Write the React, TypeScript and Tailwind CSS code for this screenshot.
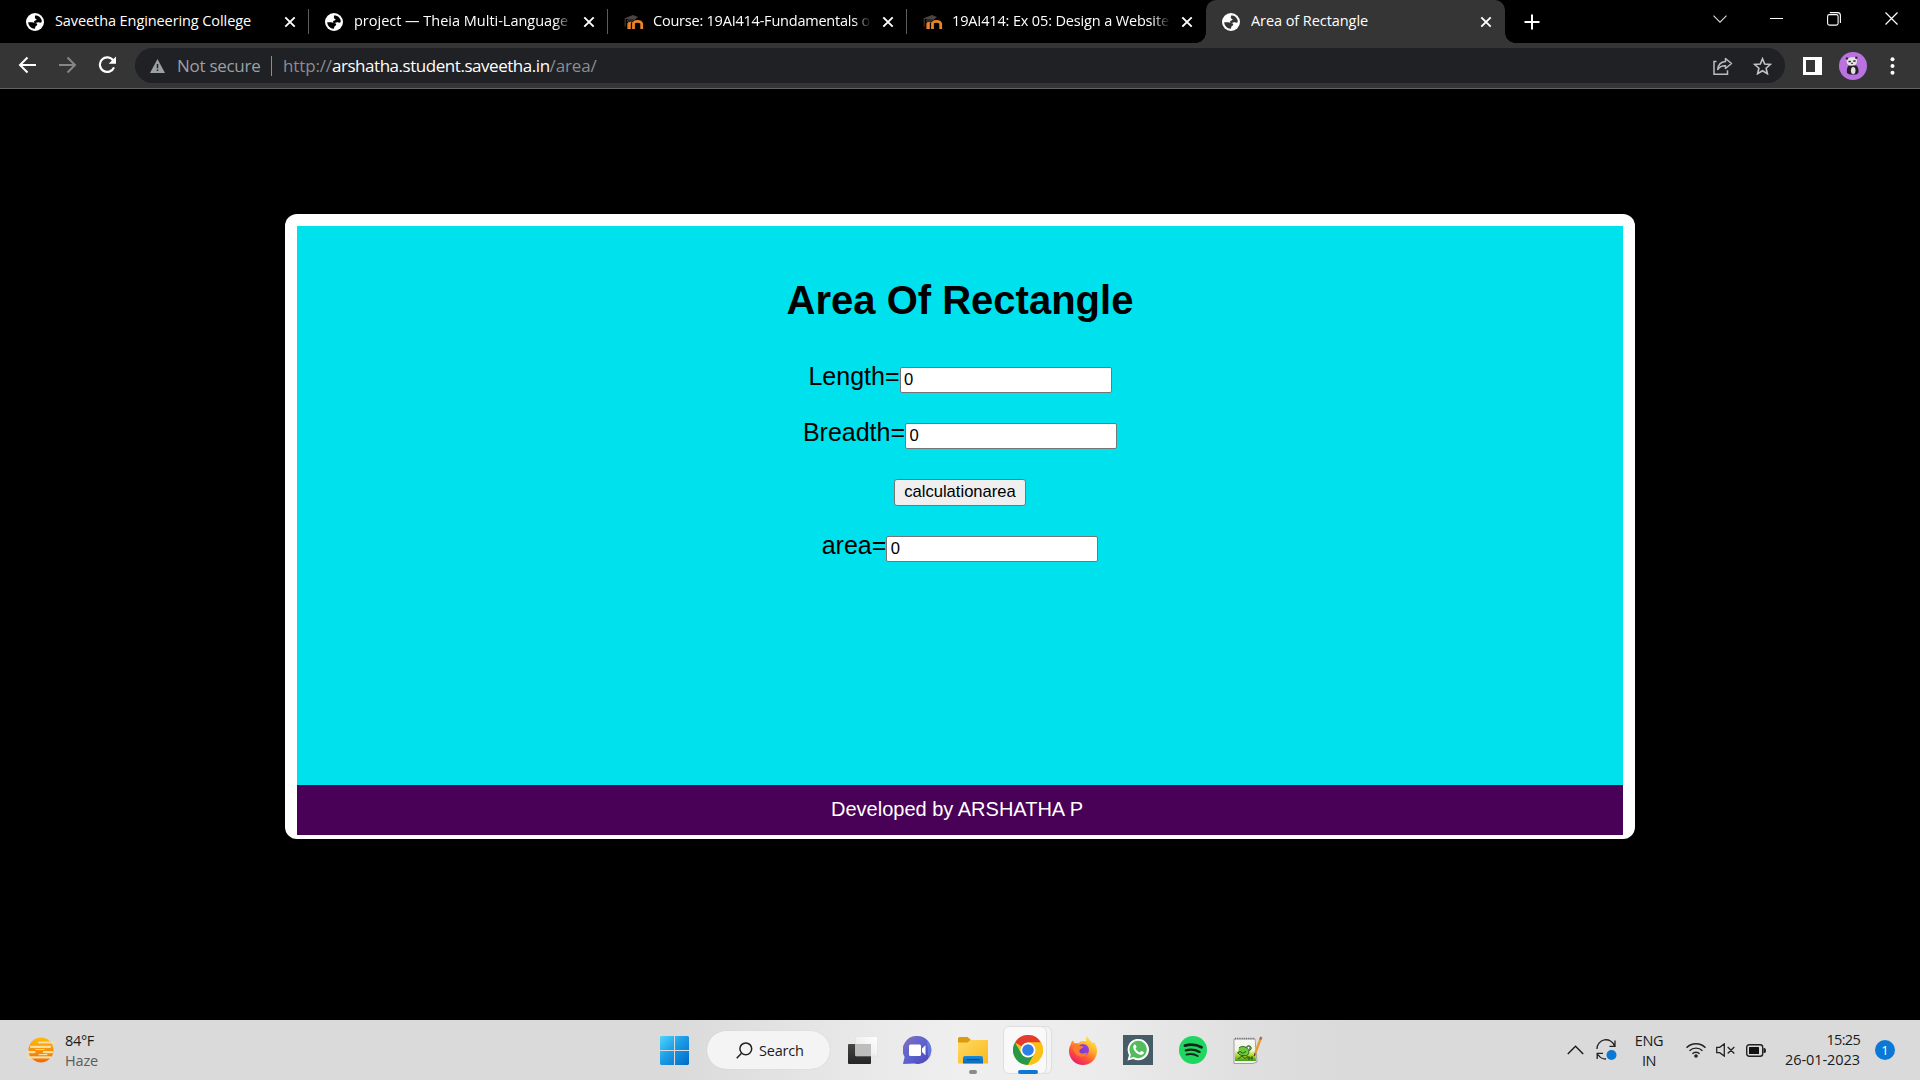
import React from "react";

const Globe = ({ cut }: { cut: string }) => (
  <svg width="18" height="18" viewBox="0 0 18 18">
    <circle cx="9" cy="9" r="9" fill="#fff" />
    <path
      d="M9.500 2.300c2.700.2 5 1.800 6 4.500.3.800.300 1.700.1 2.500-1 .6-2 .5-2.900 0-.9-.4-1.500.1-2.300.5-.9.400-2.200.1-2.300-.9-.1-.8.5-1.200 1.300-1.400.9-.2 1.500-.7 1-1.300-.5-.5-1.300-.6-1.500-1.500-.2-.8.100-1.700.6-2.400zM2.200 9.300h4c1.500 0 2.500.8 3.700 1 1.500.2 1.700 1.300.8 2.100-.8.600-1.500.8-1.500 1.900 0 .7 0 1.200-.4 1.500C5 15.600 2.400 12.900 2.200 9.300z"
      fill={cut}
    />
  </svg>
);

const Moodle = () => (
  <svg width="20" height="18" viewBox="0 0 20 18">
    <path d="M9.500 16V8.500M9.500 10.500C9.500 7.800 17.700 7.200 17.700 11v5M5.400 16v-5.300c0-1.400.7-2 1.900-2.300" fill="none" stroke="#ea852c" strokeWidth="2.800" />
    <path d="M0 5.500 9 2l5 2-3.500 3L5 6.500 0 5.500z" fill="#4a4542" />
    <path d="M3 6.500h7l-.8 2.700L3 9z" fill="#2c2927" />
    <path d="M1.200 6v7.500" stroke="#7a4b22" strokeWidth=".8" />
    <path d="M3.700 16V10" stroke="#b86821" strokeWidth="1" />
  </svg>
);

const X = () => (
  <svg width="12" height="12" viewBox="0 0 12 12" stroke="#fff" strokeWidth="1.9" fill="none">
    <path d="M1.300 1.300l9.400 9.400M10.700 1.300l-9.400 9.400" />
  </svg>
);

type TabProps = { icon: React.ReactNode; title: string; track: string; fade?: boolean; sep?: boolean; active?: boolean };

const Tab = ({ icon, title, track, fade, sep, active }: TabProps) => (
  <div className={`relative flex h-[43px] w-[299px] shrink-0 items-center pl-4 ${active ? "rounded-t-[10px] bg-[#353535]" : ""}`}>
    {active && (
      <>
        <div className="absolute bottom-0 -left-[10px] size-[10px] bg-[radial-gradient(circle_at_0_0,transparent_9.500px,#353535_10px)]" />
        <div className="absolute bottom-0 -right-[10px] size-[10px] bg-[radial-gradient(circle_at_100%_0,transparent_9.500px,#353535_10px)]" />
      </>
    )}
    <div className="flex w-[29px] shrink-0">{icon}</div>
    <div
      className={`mb-[2px] w-[218px] overflow-hidden text-[14.5px] leading-5 whitespace-nowrap text-white ${track} ${
        fade ? "[mask-image:linear-gradient(to_right,#000_92%,transparent)]" : ""
      }`}
    >
      {title}
    </div>
    <div className="ml-[11px]">
      <X />
    </div>
    {sep && <div className="absolute top-[9px] right-0 h-[25px] w-px bg-[#5c5c5c]" />}
  </div>
);

const Field = ({ label, value }: { label: string; value: string }) => (
  <div className="flex h-[56.300px] items-start justify-center">
    <label className="text-[25px] leading-7">{label}</label>
    <input
      readOnly
      value={value}
      className="mt-[5px] h-[26px] w-[212px] rounded-[2px] border border-[#767676] bg-white px-[3.500px] text-[16.600px] leading-5 outline-none"
    />
  </div>
);

const Cell = ({ children }: { children: React.ReactNode }) => (
  <div className="relative flex h-full w-[55px] shrink-0 items-center justify-center">{children}</div>
);

const Windows = () => (
  <svg width="29" height="29" viewBox="0 0 29 29">
    <defs>
      <linearGradient id="win" x1="0" y1="0" x2="29" y2="29" gradientUnits="userSpaceOnUse">
        <stop offset="0" stopColor="#4fd5ff" />
        <stop offset=".45" stopColor="#1c9de6" />
        <stop offset="1" stopColor="#0069c8" />
      </linearGradient>
    </defs>
    <path fill="url(#win)" d="M1 0h13v14H0V1zM15 0h13l1 1v13H15zM0 15h14v14H1l-1-1zM15 15h14v13l-1 1H15z" />
  </svg>
);

const TaskView = () => (
  <svg width="30" height="28" viewBox="0 0 30 28">
    <defs>
      <linearGradient id="tv" x1="0" y1="0" x2="0" y2="1">
        <stop offset="0" stopColor="#474744" />
        <stop offset="1" stopColor="#242424" />
      </linearGradient>
      <linearGradient id="tw" x1="1" y1="0" x2="0" y2="1">
        <stop offset="0" stopColor="#fff" />
        <stop offset="1" stopColor="#e4e4e4" />
      </linearGradient>
    </defs>
    <rect y="8" width="23" height="20" rx="1" fill="url(#tv)" />
    <rect x="7.500" y=".5" width="22" height="19.500" rx="1" fill="url(#tw)" stroke="#ddd" strokeWidth=".5" />
    <rect x="7.500" y="8" width="15.500" height="12" fill="#bdbdbd" />
  </svg>
);

const Chat = () => (
  <svg width="29" height="28" viewBox="0 0 29 28">
    <defs>
      <linearGradient id="chat" x1="0" y1="0" x2="1" y2="1">
        <stop offset="0" stopColor="#8d6fb5" />
        <stop offset=".3" stopColor="#6a68c8" />
        <stop offset=".5" stopColor="#5b63d0" />
        <stop offset="1" stopColor="#4b45b4" />
      </linearGradient>
    </defs>
    <path d="M14.500 0a14 14 0 1 1-3.500 27.600L0 28l1.600-7A14 14 0 0 1 14.500 0z" fill="url(#chat)" />
    <path d="M24 4.500a14 14 0 0 1 4.500 10 14 14 0 0 1-3 8.500z" fill="#7a9af5" opacity=".5" />
    <rect x="6" y="8.500" width="12" height="11.500" rx="1.500" fill="#fff" />
    <path d="M19 12.500l3.500-3.200v9.900L19 16z" fill="#fff" />
  </svg>
);

const Folder = () => (
  <svg width="30" height="27" viewBox="0 0 30 27">
    <defs>
      <linearGradient id="fold" x1="0" y1="0" x2="1" y2="1">
        <stop offset="0" stopColor="#ffd968" />
        <stop offset="1" stopColor="#fbb917" />
      </linearGradient>
      <linearGradient id="fb" x1="0" y1="0" x2="0" y2="1">
        <stop offset="0" stopColor="#1a8be0" />
        <stop offset="1" stopColor="#0a6ab8" />
      </linearGradient>
    </defs>
    <path d="M0 1.500Q0 0 1.500 0h8l3.500 3h15q2 0 2 2v5H0z" fill="#dc9a0c" />
    <path d="M0 5.500h9.500L12.500 3H28.500q1.500 0 1.500 1.500V26.500H0z" fill="url(#fold)" />
    <path d="M5 26.500V21q0-2 2-2h16q2 0 2 2v5.500z" fill="url(#fb)" />
    <path d="M8.500 22.700h13" stroke="#08467e" strokeWidth="1" />
  </svg>
);

const Chrome = () => (
  <svg width="30" height="30" viewBox="0 0 48 48">
    <circle cx="24" cy="24" r="24" fill="#fbc116" />
    <path d="M24 24 3.200 12A24 24 0 0 1 44.800 12H24z" fill="#e33b2e" />
    <path d="M3.200 12A24 24 0 0 0 24 48L34.400 30 24 24 13.600 30z" fill="#279847" />
    <path d="M24 12h20.800A24 24 0 0 1 24 48l10.400-18z" fill="#fbc116" />
    <circle cx="24" cy="24" r="12" fill="#fff" />
    <circle cx="24" cy="24" r="9.300" fill="#2f7de9" />
  </svg>
);

const Firefox = () => (
  <svg width="28" height="29" viewBox="0 0 28 29">
    <defs>
      <linearGradient id="ff" x1=".85" y1=".05" x2=".25" y2="1">
        <stop offset="0" stopColor="#fff04a" />
        <stop offset=".35" stopColor="#ffb02a" />
        <stop offset=".65" stopColor="#ff5a35" />
        <stop offset="1" stopColor="#e8156e" />
      </linearGradient>
      <linearGradient id="fp" x1="1" y1="0" x2="0" y2="1">
        <stop offset="0" stopColor="#a83bf0" />
        <stop offset="1" stopColor="#5b44b8" />
      </linearGradient>
    </defs>
    <path
      d="M4 4.500c.4 1.200 1 2 1.700 2.700C7 6.800 8.400 6.800 9.600 7.200 11 5.500 12.600 4.800 14.500 5c1-.1 2 .1 2.700.4C16.500 3.500 17 1.500 18.200 0c1 2.800 3.600 4.600 5.200 7 .6 0 1-.7.9-1.500C26.800 8 28 11.500 28 15a14 14 0 0 1-28 0c0-2.500.6-4.600 1.800-6.400C1.900 7 2.800 5.300 4 4.500z"
      fill="url(#ff)"
    />
    <circle cx="14" cy="14" r="6" fill="url(#fp)" />
    <path d="M3 9.500c3-2.200 6.300-1.200 8 .6 1.300.3 2.800.1 3.500.7-.6 1.700-3.300 2-4 3.500-.6 1.500.6 3.200 2.800 3.300 2.200.2 3.400-1.300 5-.5-1.200 3-4.200 4-7 3.300C6.500 19.300 4 15 3 9.500z" fill="#ff7a2e" />
  </svg>
);

const WhatsApp = () => (
  <svg width="30" height="30" viewBox="0 0 30 30">
    <rect width="30" height="30" fill="#465c66" />
    <path d="M4.500 25.500l1.500-5.600A10.700 10.700 0 1 1 10.200 24z" fill="#fff" />
    <path d="M6.900 23.100l1-3.700A8.700 8.700 0 1 1 10.700 22z" fill="#54bd5b" />
    <path
      d="M11.800 9.500c-.9.3-1.700 1.300-1.600 2.700.2 3.600 4.500 7.600 8.300 7.600 1.300-.1 2.400-1 2.400-2.300 0-.5-2.300-1.600-2.700-1.500-.5.100-.9 1.400-1.400 1.400-1.200-.2-3.900-2.600-4.200-3.900 0-.4 1-1.100.9-1.600-.3-1-.9-2.300-1.700-2.400z"
      fill="#fff"
    />
  </svg>
);

const Spotify = () => (
  <svg width="28" height="28" viewBox="0 0 28 28" fill="none" stroke="#15251a" strokeLinecap="round">
    <circle cx="14" cy="14" r="14" fill="#1fd760" stroke="none" />
    <path d="M6 9.600c5.500-1.500 11.500-1 16.500 1.700" strokeWidth="2.800" />
    <path d="M6.800 14.300c4.500-1.300 9.600-.7 13.800 1.600" strokeWidth="2.300" />
    <path d="M7.400 18.600c3.800-1 7.900-.5 11.300 1.400" strokeWidth="1.900" />
  </svg>
);

const Notepad = () => (
  <svg width="30" height="29" viewBox="0 0 30 29">
    <defs>
      <linearGradient id="np" x1="0" y1="0" x2="0" y2="1">
        <stop offset="0" stopColor="#f8f8f8" />
        <stop offset=".5" stopColor="#f1f6d8" />
        <stop offset=".75" stopColor="#a6d61c" />
        <stop offset="1" stopColor="#3f9e1c" />
      </linearGradient>
    </defs>
    <path d="M1 3h21l2 23-4 1.500H1z" fill="#f4f4f4" stroke="#8e8e8e" strokeWidth=".8" />
    <path d="M2 4h19.500l1.500 21H2z" fill="url(#np)" />
    <path d="M2 2.500h20" stroke="#666" strokeWidth="1.600" strokeDasharray="1 1.200" />
    <path d="M6 12c2-2 5-2 7-.5 1-2 4-2.300 5-.3.800 1.800-.8 3.600-2.600 3.600 1.200 2.300-.3 4.700-3 4.800-3 .3-6-.4-7.400-2.600" fill="#6fc93c" stroke="#20531a" strokeWidth=".9" />
    <path d="M4 17l3-1.500 3 1.800 3-2M5 23l4-3 3 2.500 3-2.500M14 22h6M16 20v4M19 20v4" fill="none" stroke="#1e3a14" strokeWidth=".8" />
    <circle cx="15.500" cy="11.800" r="1.500" fill="#fff" stroke="#222" strokeWidth=".6" />
    <path d="M27.500 3 22 18" stroke="#e79a2e" strokeWidth="2.300" />
    <path d="M28.300 1l-1 2.600" stroke="#a06a5a" strokeWidth="2.400" />
    <path d="M22.200 17.500l-.9 2.500" stroke="#444" strokeWidth="1.400" />
  </svg>
);

const Weather = () => (
  <svg width="30" height="27" viewBox="0 0 30 27">
    <defs>
      <linearGradient id="sun" x1="0" y1="0" x2="0" y2="1">
        <stop offset="0" stopColor="#fdbc0b" />
        <stop offset="1" stopColor="#ee6a0c" />
      </linearGradient>
    </defs>
    <circle cx="15" cy="13" r="12.500" fill="url(#sun)" />
    <g stroke="#f8dda0" strokeWidth="2.200" strokeLinecap="round" fill="none">
      <path d="M13 5.500h16M5 9.800h19M1.500 15.200h7M18 15.200h8M1.500 20.300h23" />
      <path d="M10 12.500h8M13 17.700h8" strokeWidth="1.200" />
    </g>
  </svg>
);

export default function App() {
  return (
    <div className="flex h-[1080px] w-[1920px] flex-col overflow-hidden bg-black font-['Open_Sans',sans-serif]">
      <header className="shrink-0">
        <div className="flex h-[43px] items-center pl-[10px]">
          <Tab icon={<Globe cut="#000" />} title="Saveetha Engineering College" track="tracking-[-0.09px]" sep />
          <Tab icon={<Globe cut="#000" />} title="project — Theia Multi-Language" track="tracking-[-0.01px]" fade sep />
          <Tab icon={<Moodle />} title="Course: 19AI414-Fundamentals o" track="tracking-[-0.22px]" fade sep />
          <Tab icon={<Moodle />} title="19AI414: Ex 05: Design a Website" track="tracking-[-0.15px]" fade />
          <Tab icon={<Globe cut="#353535" />} title="Area of Rectangle" track="tracking-[-0.07px]" active />
          <svg className="ml-[19px]" width="16" height="16" viewBox="0 0 16 16" stroke="#fff" strokeWidth="2">
            <path d="M8 .5v15M.5 8h15" />
          </svg>
          <div className="mb-[6px] ml-auto flex h-9 w-[229px] items-center">
            <div className="flex w-[57px] justify-center">
              <svg width="14" height="8" viewBox="0 0 14 8" fill="none" stroke="#ddd" strokeWidth="1.100">
                <path d="M.5.700 7 7.200 13.500.700" />
              </svg>
            </div>
            <div className="flex w-[57px] justify-center">
              <div className="h-px w-[13px] bg-white" />
            </div>
            <div className="flex w-[58px] justify-center">
              <svg width="14" height="14" viewBox="0 0 14 14" fill="none" stroke="#fff" strokeWidth="1.100">
                <rect x=".6" y="2.600" width="10.500" height="10.500" rx="1.800" />
                <path d="M2.800.6h7.700q2.900 0 2.900 2.900v7.500" />
              </svg>
            </div>
            <div className="flex w-[57px] justify-center">
              <svg width="13" height="13" viewBox="0 0 13 13" stroke="#fff" strokeWidth="1.200">
                <path d="M.5.500l12 12M12.500.500l-12 12" />
              </svg>
            </div>
          </div>
        </div>

        <div className="flex h-[46px] items-center border-b border-[#636363] bg-[#353535] pl-[18px]">
          <svg className="mb-px" width="19" height="18" viewBox="0 0 19 18" fill="none" stroke="#fff" strokeWidth="2">
            <path d="M18 9H2.500M9.500 1.500 2 9l7.500 7.500" />
          </svg>
          <svg className="mb-px ml-[21px]" width="19" height="18" viewBox="0 0 19 18" fill="none" stroke="#868686" strokeWidth="2">
            <path d="M1 9h15.500M9.500 1.500 17 9l-7.500 7.500" />
          </svg>
          <svg className="mb-px ml-[20px]" width="20" height="18" viewBox="0 0 20 18" fill="none" stroke="#fff" strokeWidth="2.200">
            <path d="M16.300 4.600A7.300 7.300 0 1 0 17 11.300" />
            <path d="M19 .5v7.300h-7.300z" fill="#fff" stroke="none" />
          </svg>
          <div className="ml-[18px] flex h-[35px] w-[1650px] items-center rounded-full bg-[#202124] pl-[15px] text-[17px] leading-6 text-[#9aa0a6]">
            <svg width="15" height="14" viewBox="0 0 15 14">
              <path d="M7.500 0 15 14H0z" fill="#9aa0a6" />
              <path d="M7.500 5v4.200M7.500 10.500v1.600" stroke="#202124" strokeWidth="1.500" />
            </svg>
            <span className="ml-[12px] w-[84px] tracking-[-0.280px] whitespace-nowrap">Not secure</span>
            <span className="ml-[10px] h-5 w-px bg-[#8a8d91]" />
            <span className="ml-[11px] flex whitespace-nowrap text-[#8a8d91]">
              <span className="tracking-[-0.130px]">http://</span>
              <span className="tracking-[-0.460px] text-white">arshatha.student.saveetha.in</span>
              <span className="tracking-[-0.140px]">/area/</span>
            </span>
            <svg className="ml-auto" width="20" height="18" viewBox="0 0 20 18" fill="none" stroke="#bcbcbc" strokeWidth="1.500">
              <path d="M3.500 4.500H1v12.700h13.500v-4" />
              <path d="M12.500 1.500 18.500 6.500l-6 5V8.700C9 8.500 6.500 9.800 4.700 12.500 5 8 8 4.800 12.500 4.400z" strokeLinejoin="round" />
            </svg>
            <svg className="mr-[13px] ml-5" width="19" height="18" viewBox="0 0 19 18" fill="none" stroke="#c4c4c4" strokeWidth="1.600">
              <path d="M9.500 1.800 11.700 7l5.600.5-4.200 3.700 1.300 5.500-4.900-2.900-4.900 2.900 1.300-5.500L1.700 7.500 7.300 7z" />
            </svg>
          </div>
          <svg className="ml-[18px]" width="19" height="18" viewBox="0 0 19 18">
            <path d="M0 0h19v18H0zM3 3v12h9V3z" fill="#fff" fillRule="evenodd" />
          </svg>
          <svg className="ml-[17px]" width="28" height="28" viewBox="0 0 28 28">
            <circle cx="14" cy="14" r="14" fill="#ba72e0" />
            <path d="M9.500 13.500c-1.500 2-2 5-1.500 7.500l2.500 1.500h7l2-2c.300-3-.5-5.500-2-7z" fill="#262026" />
            <path d="M7.800 7c2.500-1.800 6.500-2.200 9.500-1.300 1 2 .9 4.500-.3 6.800-2.500 1.200-5.500 1.300-7.700.5C7.600 11.500 7.300 9 7.800 7z" fill="#e4e2e4" />
            <ellipse cx="14.200" cy="18.500" rx="2.300" ry="3.600" fill="#e4e2e4" />
            <circle cx="8" cy="6.500" r="1.200" fill="#33292f" />
            <circle cx="17.300" cy="5.800" r="1.200" fill="#33292f" />
            <path d="M9.500 9.500h2.300M14.300 9h2.300M12.300 11.300h1.500" stroke="#222" strokeWidth="1.300" />
          </svg>
          <svg className="ml-[23px]" width="5" height="18" viewBox="0 0 5 18" fill="#fff">
            <circle cx="2.500" cy="2.300" r="2" />
            <circle cx="2.500" cy="9" r="2" />
            <circle cx="2.500" cy="15.700" r="2" />
          </svg>
        </div>
      </header>

      <main className="flex flex-1 flex-col items-center bg-black pt-[125px] font-['Liberation_Sans',Arial,sans-serif] text-black">
        <section className="flex h-[625px] w-[1350px] flex-col rounded-xl bg-white px-3 pt-3">
          <div className="h-[559px] bg-[#00e1ee] pt-[51px] text-center">
            <h1 className="text-[40px] leading-[46px] font-bold">Area Of Rectangle</h1>
            <div className="mt-[39px]">
              <Field label="Length=" value="0" />
              <Field label="Breadth=" value="0" />
              <div className="flex h-[56.300px] items-start justify-center">
                <button className="mt-1 h-[27px] w-[132px] rounded-[3px] border border-[#767676] bg-[#efefef] text-[16.600px] leading-6">
                  calculationarea
                </button>
              </div>
              <Field label="area=" value="0" />
            </div>
          </div>
          <footer className="h-[50px] bg-[#490057] pr-[6px] text-center text-[20px] leading-[48px] text-white">Developed by ARSHATHA P</footer>
        </section>
      </main>

      <footer className="flex h-[60px] shrink-0 items-center bg-[linear-gradient(to_right,#dadada_0%,#dadada_35%,#e6e6e6_43%,#efefef_50%,#ececec_57%,#dfdfdf_65%,#dadada_70%,#dadada_100%)] text-[14.500px] leading-5 text-[#1b1b1b]">
        <div className="flex w-[647px] items-center pl-[26px]">
          <Weather />
          <div className="mt-[2px] ml-[9px]">
            <div className="tracking-[-0.320px]">84°F</div>
            <div className="tracking-[-0.170px] text-[#5c5c5c]">Haze</div>
          </div>
        </div>
        <Cell>
          <Windows />
        </Cell>
        <div className="mx-[5px] flex h-[38px] w-[123px] items-center rounded-full bg-[#f4f4f4] pl-[29px] shadow-[0_0_1px_#bbb]">
          <svg width="17" height="17" viewBox="0 0 17 17" fill="none" stroke="#222" strokeWidth="1.500">
            <circle cx="9.800" cy="6.800" r="5.900" />
            <path d="M5.500 11.200.700 16.300" />
          </svg>
          <span className="mt-[2px] ml-[6px] tracking-[-0.200px]">Search</span>
        </div>
        <Cell>
          <TaskView />
        </Cell>
        <Cell>
          <Chat />
        </Cell>
        <Cell>
          <Folder />
          <div className="absolute bottom-[6px] left-[24px] h-1 w-2 rounded-full bg-[#8a8a8a]" />
        </Cell>
        <Cell>
          <div className="absolute top-[6px] left-[8px] h-12 w-[44px] rounded-md border border-[#dedede] bg-[#f4f4f4]" />
          <div className="absolute top-[6px] left-[3px] h-12 w-[44px] rounded-md border border-[#dedede] bg-[#f9f9f9]" />
          <div className="relative flex">
            <Chrome />
          </div>
          <div className="absolute bottom-[6px] left-[18px] h-1 w-5 rounded-full bg-[#0a78d4]" />
        </Cell>
        <Cell>
          <Firefox />
        </Cell>
        <Cell>
          <WhatsApp />
        </Cell>
        <Cell>
          <Spotify />
        </Cell>
        <Cell>
          <Notepad />
        </Cell>
        <div className="ml-auto flex items-center pr-[25px]">
          <svg width="17" height="10" viewBox="0 0 17 10" fill="none" stroke="#1b1b1b" strokeWidth="1.400">
            <path d="M.8 9 8.500 1.300 16.200 9" />
          </svg>
          <svg className="ml-3" width="21" height="22" viewBox="0 0 21 22" fill="none" stroke="#222" strokeWidth="1.300">
            <path d="M1 10A9 9 0 0 1 18.500 6.800M19 1.500v5.800h-5.500M1.200 20v-5.700H7M2 15.500A9 9 0 0 0 10 20" />
            <circle cx="15.500" cy="16" r="5" fill="#0a78d4" stroke="none" />
          </svg>
          <div className="mt-[2px] ml-[17px] w-[30px] text-center">
            <div className="tracking-[-0.340px]">ENG</div>
            <div className="tracking-[-0.480px]">IN</div>
          </div>
          <svg className="ml-[22px]" width="20" height="16" viewBox="0 0 20 16" fill="none" stroke="#222" strokeWidth="1.400">
            <path d="M.5 5.800a13.300 13.300 0 0 1 19 0M3.500 8.800a9.200 9.200 0 0 1 13 0M6.400 11.700a5.100 5.100 0 0 1 7.200 0" />
            <circle cx="10" cy="14" r="1.800" fill="#222" stroke="none" />
          </svg>
          <svg className="ml-[10px]" width="20" height="14" viewBox="0 0 20 14" fill="none" stroke="#222" strokeWidth="1.300">
            <path d="M.7 4.300h3L8.300.900v12.200L3.700 9.700h-3zM11.700 4l6.600 6.500M18.300 4l-6.600 6.500" />
          </svg>
          <svg className="ml-[10px]" width="20" height="13" viewBox="0 0 20 13">
            <rect x=".7" y=".8" width="16" height="11.400" rx="2.500" fill="none" stroke="#222" strokeWidth="1.400" />
            <rect x="3" y="3" width="10" height="7" rx=".5" fill="#111" />
            <path d="M17.500 4h1q1.500 0 1.500 2.500T18.500 9h-1z" fill="#222" />
          </svg>
          <div className="ml-[18px] w-[76px] text-right whitespace-nowrap">
            <div className="tracking-[-0.690px]">15:25</div>
            <div className="tracking-[-0.070px]">26-01-2023</div>
          </div>
          <div className="ml-[15px] flex size-5 items-center justify-center rounded-full bg-[#0a78d4] text-[13px] text-white">1</div>
        </div>
      </footer>
    </div>
  );
}
